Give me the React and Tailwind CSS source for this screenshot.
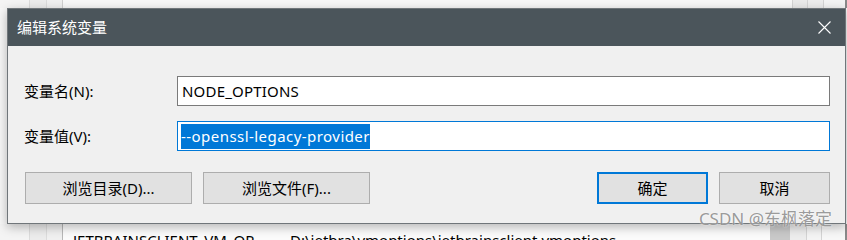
import React from "react";

const font = "font-['Noto_Sans','Noto_Sans_CJK_SC',sans-serif]";

const Btn = ({ children, primary, className = "" }) => (
  <div
    className={`flex items-center justify-center h-[32px] bg-[#e1e1e1] text-[15px] text-black ${
      primary ? "border-2 border-[#0078d7]" : "border border-[#adadad]"
    } ${className}`}
  >
    {children}
  </div>
);

export default function App() {
  return (
    <div className={`relative w-[847px] h-[240px] overflow-hidden bg-[#f7f7f7] ${font}`}>
      {/* window behind, top */}
      <div className="flex h-[8px]">
        <div className="w-[30px] bg-[#f4f4f4] border-r border-[#dcdcdc]" />
        <div className="w-[17px] bg-[#ececec] border-r border-[#dcdcdc]" />
        <div className="w-[16px] bg-[#f0f0f0] border-r border-[#d0d0d0]" />
        <div className="flex-1 bg-[#f8f8f8]" />
        <div className="w-[15px] bg-[#eaeaea] border-l border-[#d4d4d4]" />
        <div className="w-[16px] bg-[#ededed] border-l border-[#d4d4d4]" />
        <div className="w-[22px] bg-[#f4f4f4] border-l border-[#d4d4d4]" />
        <div className="w-[2px] bg-[#8a8a8a]" />
      </div>

      {/* dialog */}
      <div className="relative z-10 ml-[7px] w-[839px] h-[216px] border border-[#70767a] bg-[#f0f0f0] shadow-[0_3px_10px_rgba(0,0,0,0.28)] flex flex-col">
        <div className="flex items-center h-[37px] bg-[#4b555b] pl-[9px] pr-[14px]">
          <span className="text-[15px] text-white">编辑系统变量</span>
          <svg className="ml-auto" width="13" height="13" viewBox="0 0 13 13">
            <path d="M0.5 0.5L12.5 12.5M12.5 0.5L0.5 12.5" stroke="#ffffff" strokeWidth="1.1" />
          </svg>
        </div>

        <div className="flex flex-col pt-[30px] pl-[16px] pr-[15px]">
          <div className="flex items-center h-[30px]">
            <div className="w-[153px] text-[15px] text-black">变量名(N):</div>
            <div className="flex-1 h-[30px] border border-[#7a7a7a] bg-white flex items-center pl-[4px] text-[15px] text-black tracking-[0.2px]">
              NODE_OPTIONS
            </div>
          </div>
          <div className="flex items-center h-[30px] mt-[15px]">
            <div className="w-[153px] text-[15px] text-black">变量值(V):</div>
            <div className="flex-1 h-[30px] border border-[#0078d7] bg-white flex items-center pl-[3px]">
              <span className="bg-[#0078d7] text-white text-[15px] leading-[25px] tracking-[0.45px]">
                --openssl-legacy-provider
              </span>
            </div>
          </div>
          <div className="flex items-center mt-[21px] pl-px">
            <Btn className="w-[167px]">浏览目录(D)...</Btn>
            <Btn className="w-[167px] ml-[11px]">浏览文件(F)...</Btn>
            <Btn primary className="w-[111px] ml-auto">确定</Btn>
            <Btn className="w-[111px] ml-[11px]">取消</Btn>
          </div>
        </div>
      </div>

      {/* window behind, bottom */}
      <div className="flex h-[16px]">
        <div className="w-[30px] bg-[#f4f4f4] border-r border-[#dcdcdc]" />
        <div className="w-[17px] bg-[#ececec] border-r border-[#dcdcdc]" />
        <div className="w-[16px] bg-[#f0f0f0] border-r border-[#b8b8b8]" />
        <div className="flex-1 bg-[#fbfbfb] flex pl-[10px] pt-[6px] text-[15px] text-black leading-[20px] whitespace-nowrap">
          <span className="w-[217px]">JETBRAINSCLIENT_VM_OP...</span>
          <span>D:\jetbra\vmoptions\jetbrainsclient.vmoptions</span>
        </div>
        <div className="w-[20px] bg-[#c9c9c9]" />
        <div className="w-[17px] bg-[#ededed] border-r border-[#d4d4d4]" />
        <div className="w-[15px] bg-[#f4f4f4] border-r border-[#d4d4d4]" />
        <div className="w-[23px] bg-[#f7f7f7]" />
        <div className="w-[2px] bg-[#8a8a8a]" />
      </div>

      {/* watermark */}
      <div className="absolute z-20 right-[15px] top-[209px] text-[17px] leading-[20px] text-[#8e8e8e]/90 whitespace-nowrap [text-shadow:0_0_2px_rgba(255,255,255,0.95)]">
        CSDN @东枫落定
      </div>
    </div>
  );
}
